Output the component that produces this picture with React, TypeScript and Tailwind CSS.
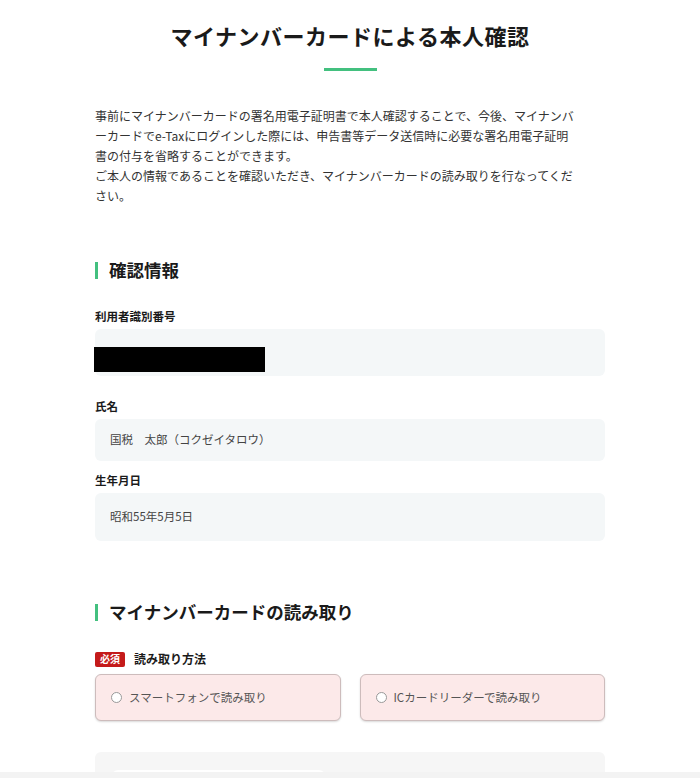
export default function App() {
  return (
    <div className="min-h-[778px] bg-white font-['Noto_Sans_CJK_JP','Noto_Sans',sans-serif] text-[#1a1a1a]">
      <div className="mx-auto w-[510px] pt-[19px]">
        {/* Page title */}
        <h1 className="text-center text-[22px] font-bold leading-[32px] tracking-[0.5px]">
          マイナンバーカードによる本人確認
        </h1>
        <div className="mx-auto mt-[17px] h-[3px] w-[53px] bg-[#43c07f]" />

        <p className="mt-[35px] w-[484px] text-[12px] leading-[20px] text-[#333]">
          事前にマイナンバーカードの署名用電子証明書で本人確認することで、今後、マイナンバーカードでe-Taxにログインした際には、申告書等データ送信時に必要な署名用電子証明書の付与を省略することができます。
          <br />
          ご本人の情報であることを確認いただき、マイナンバーカードの読み取りを行なってください。
        </p>

        {/* 確認情報 */}
        <h2 className="mt-[52px] flex items-center gap-[11px] text-[17.5px] font-bold leading-[24px]">
          <span className="h-[17px] w-[3px] bg-[#43c07f]" />
          確認情報
        </h2>

        <div className="mt-[26px] text-[11.5px] font-bold leading-[16px]">利用者識別番号</div>
        <div className="mt-[5px] h-[47px] rounded-[6px] bg-[#f4f7f8] pt-[18px]">
          <div className="-ml-[1px] h-[25px] w-[171px] bg-black" />
        </div>

        <div className="mt-[22px] text-[11.5px] font-bold leading-[16px]">氏名</div>
        <div className="mt-[5px] flex h-[42px] items-center rounded-[6px] bg-[#f4f7f8] px-[15px] text-[11.5px] text-[#444]">
          国税　太郎（コクゼイタロウ）
        </div>

        <div className="mt-[11px] text-[11.5px] font-bold leading-[16px]">生年月日</div>
        <div className="mt-[5px] flex h-[48px] items-center rounded-[6px] bg-[#f4f7f8] px-[15px] text-[11.5px] text-[#444]">
          昭和55年5月5日
        </div>

        {/* マイナンバーカードの読み取り */}
        <h2 className="mt-[59px] flex items-center gap-[11px] text-[17.5px] font-bold leading-[24px]">
          <span className="h-[17px] w-[3px] bg-[#43c07f]" />
          マイナンバーカードの読み取り
        </h2>

        <div className="mt-[27px] flex h-[16px] items-center gap-[9px]">
          <span className="flex h-[15px] w-[30px] items-center justify-center rounded-[2px] bg-[#c41a1a] text-[10px] font-bold leading-none text-white">
            必須
          </span>
          <span className="text-[12px] font-bold">読み取り方法</span>
        </div>

        <div className="mt-[7px] grid grid-cols-2 gap-[19px]">
          {["スマートフォンで読み取り", "ICカードリーダーで読み取り"].map((label) => (
            <label
              key={label}
              className="flex h-[47px] items-center gap-[7px] rounded-[6px] border border-[#cdbcbc] bg-[#fce9e9] px-[15px] text-[11.5px] text-[#555] shadow-[0_1px_2px_rgba(0,0,0,0.15)]"
            >
              <span className="h-[11px] w-[11px] rounded-full border border-[#999] bg-white" />
              {label}
            </label>
          ))}
        </div>

        <div className="mt-[31px] h-[40px] rounded-[6px] bg-[#f6f6f6] px-[17px] pt-[18px]">
          <div className="h-[20px] w-[213px] rounded-[6px] bg-white" />
        </div>
      </div>
      <div className="fixed bottom-0 left-0 h-[6px] w-full bg-[#f3f3f3]" />
    </div>
  );
}
